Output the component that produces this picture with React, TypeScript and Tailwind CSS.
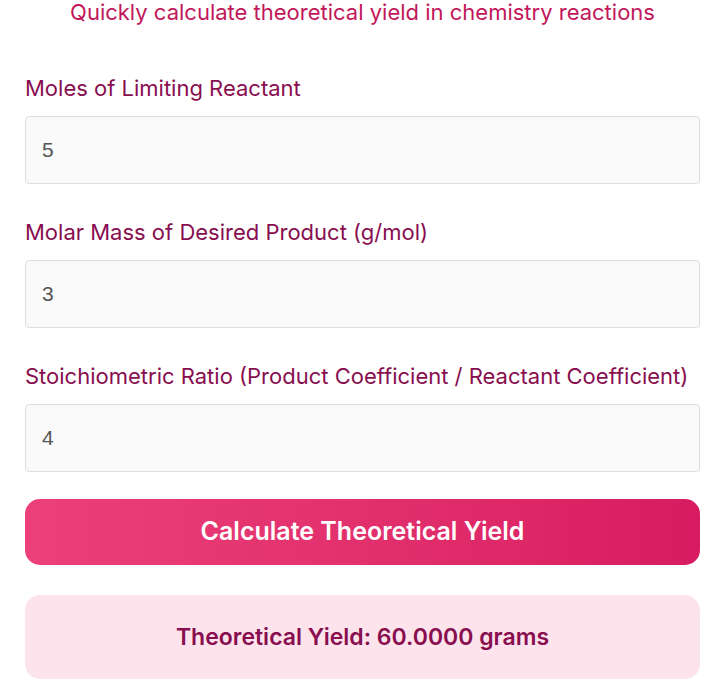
import { useState } from "react";

const fields = [
  { id: "moles", label: "Moles of Limiting Reactant" },
  { id: "molar", label: "Molar Mass of Desired Product (g/mol)" },
  { id: "ratio", label: "Stoichiometric Ratio (Product Coefficient / Reactant Coefficient)" },
];

export default function App() {
  const [values, setValues] = useState<Record<string, string>>({
    moles: "5",
    molar: "3",
    ratio: "4",
  });
  const [result, setResult] = useState<number | null>(60);

  const calculate = () => {
    const n = parseFloat(values.moles) || 0;
    const m = parseFloat(values.molar) || 0;
    const r = parseFloat(values.ratio) || 0;
    setResult(n * m * r);
  };

  return (
    <div className="min-h-screen bg-white font-['Inter',sans-serif]">
      <div className="ml-[25px] w-[675px]">
        {/* 副标题 */}
        <p className="text-center text-[22px] leading-[24px] text-[#c2185b]">
          Quickly calculate theoretical yield in chemistry reactions
        </p>

        <div className="mt-[50px] flex flex-col gap-[34px]">
          {fields.map((f) => (
            <div key={f.id}>
              <label
                htmlFor={f.id}
                className="block text-[22px] leading-[28px] text-[#880e4f]"
              >
                {f.label}
              </label>
              <input
                id={f.id}
                type="number"
                value={values[f.id]}
                onChange={(e) => setValues({ ...values, [f.id]: e.target.value })}
                className="mt-[14px] h-[68px] w-full rounded-[4px] border border-[#dddddd] bg-[#fafafa] px-4 font-['Liberation_Sans',sans-serif] text-[21px] text-[#555555] outline-none [appearance:textfield]"
              />
            </div>
          ))}
        </div>

        <button
          type="button"
          onClick={calculate}
          className="mt-[27px] h-[66px] w-full rounded-[15px] bg-gradient-to-r from-[#ec407a] to-[#d81b60] text-[25px] font-semibold text-white"
        >
          Calculate Theoretical Yield
        </button>

        {result !== null && (
          <div className="mt-[30px] flex h-[84px] items-center justify-center rounded-[15px] bg-[#fde4ec] text-[23px] font-semibold text-[#880e4f]">
            Theoretical Yield: {result.toFixed(4)} grams
          </div>
        )}
      </div>
    </div>
  );
}
